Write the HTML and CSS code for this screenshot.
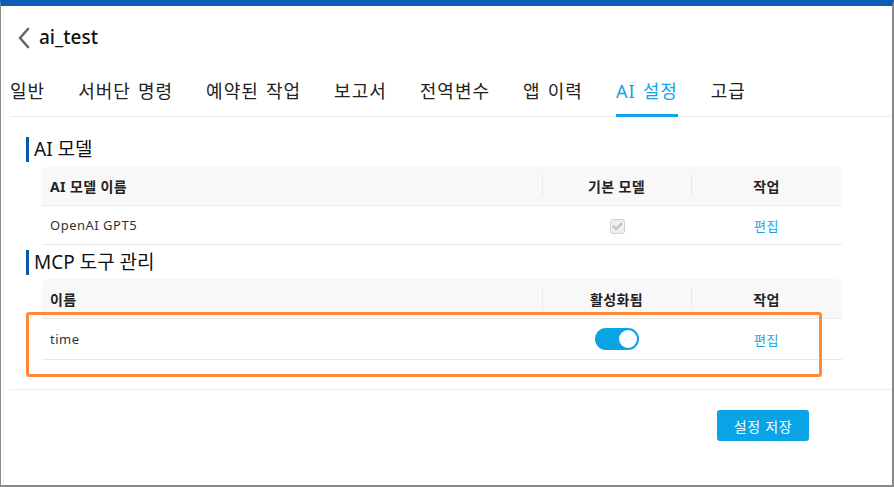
FILE: index.html
```html
<!DOCTYPE html>
<html lang="ko">
<head>
    <meta charset="UTF-8">
    <meta name="viewport" content="width=device-width, initial-scale=1.0">
    <title>ai_test - AI 설정</title>
    <link rel="stylesheet" href="styles.css">
</head>
<body>
    <div class="window">
        <div class="inner">
            <header class="app-header">
                <svg class="back" width="14" height="22" viewBox="0 0 14 22">
                    <path d="M11 2 L3 11 L11 20" fill="none" stroke="#666" stroke-width="2.6" stroke-linecap="round" stroke-linejoin="round"/>
                </svg>
                <h1>ai_test</h1>
            </header>

            <nav class="tabs">
                <a class="tab">일반</a>
                <a class="tab">서버단 명령</a>
                <a class="tab">예약된 작업</a>
                <a class="tab">보고서</a>
                <a class="tab">전역변수</a>
                <a class="tab">앱 이력</a>
                <a class="tab active">AI 설정</a>
                <a class="tab">고급</a>
            </nav>

            <div class="panel">
                <h2 class="section-title">AI 모델</h2>
                <table class="grid">
                    <colgroup>
                        <col class="col-name">
                        <col class="col-mid">
                        <col class="col-act">
                    </colgroup>
                    <thead>
                        <tr>
                            <th class="left">AI 모델 이름</th>
                            <th>기본 모델</th>
                            <th>작업</th>
                        </tr>
                    </thead>
                    <tbody>
                        <tr>
                            <td class="left">OpenAI GPT5</td>
                            <td>
                                <span class="check">
                                    <svg width="11" height="9" viewBox="0 0 11 9">
                                        <path d="M1.5 4.5 L4.2 7 L9.5 1.8" fill="none" stroke="#bdbdbd" stroke-width="2" stroke-linecap="round" stroke-linejoin="round"/>
                                    </svg>
                                </span>
                            </td>
                            <td><a class="link">편집</a></td>
                        </tr>
                    </tbody>
                </table>

                <h2 class="section-title">MCP 도구 관리</h2>
                <table class="grid">
                    <colgroup>
                        <col class="col-name">
                        <col class="col-mid">
                        <col class="col-act">
                    </colgroup>
                    <thead>
                        <tr>
                            <th class="left">이름</th>
                            <th>활성화됨</th>
                            <th>작업</th>
                        </tr>
                    </thead>
                    <tbody>
                        <tr class="tall">
                            <td class="left">time</td>
                            <td><span class="toggle on"><span class="knob"></span></span></td>
                            <td><a class="link">편집</a></td>
                        </tr>
                    </tbody>
                </table>

                <div class="highlight"></div>
            </div>

            <div class="actions">
                <button class="save">설정 저장</button>
            </div>
        </div>
    </div>
</body>
</html>
```

FILE: styles.css
```css
html, body {
    margin: 0;
    background-color: #fff;
}

body {
    font-family: "Noto Sans", "Noto Sans CJK KR", sans-serif;
    color: #222;
}

.window {
    box-sizing: border-box;
    height: 487px;
    border-top: 6px solid #0b5db3;
    border-left: 1px solid #8a8a8a;
    border-right: 2px solid #8a8a8a;
    border-bottom: 2px solid #8a8a8a;
    overflow: hidden;
}

.inner {
    margin-left: 2px;
    border-left: 1px solid #eeeeee;
    height: 100%;
}

.app-header {
    display: flex;
    align-items: center;
    height: 62px;
    padding-left: 13px;
}

.back {
    margin-right: 8px;
    margin-top: 1px;
}

.app-header h1 {
    margin: 0;
    font-size: 19px;
    font-weight: 500;
    color: #111;
}

.tabs {
    display: flex;
    margin-left: 6px;
    border-bottom: 1px solid #ececec;
    height: 48px;
}

.tab {
    display: flex;
    align-items: center;
    margin-right: 33px;
    font-size: 18px;
    letter-spacing: 1px;
    word-spacing: 1.5px;
    color: #222;
    border-bottom: 3px solid transparent;
    margin-bottom: -1px;
    padding-bottom: 3px;
    box-sizing: border-box;
}

.tab.active {
    color: #14a3e6;
    border-bottom-color: #14a3e6;
}

.panel {
    position: relative;
    margin-left: 6px;
    padding: 20px 0 29px 16px;
    border-bottom: 1px solid #ececec;
}

.section-title {
    margin: 0 0 4px;
    height: 25px;
    line-height: 24px;
    border-left: 3px solid #0b57a8;
    padding-left: 5px;
    font-size: 19px;
    font-weight: 400;
    color: #111;
}

.grid {
    margin-left: 16px;
    width: 800px;
    border-collapse: collapse;
    font-size: 13px;
    letter-spacing: 0.5px;
    margin-bottom: 5px;
}

.grid:last-of-type {
    margin-bottom: 0;
}

.col-name { width: 500px; }
.col-mid { width: 149px; }
.col-act { width: 151px; }

.grid th {
    position: relative;
    background-color: #f8f8f8;
    height: 39px;
    padding: 0;
    font-weight: 700;
    font-size: 14px;
    letter-spacing: 0.4px;
    color: #222;
    text-align: center;
    border-bottom: 1px solid #eaeaea;
}

.grid th:first-child {
    border-top-left-radius: 6px;
}

.grid th:last-child {
    border-top-right-radius: 6px;
}

.grid th + th::before {
    content: "";
    position: absolute;
    left: 0;
    top: 8px;
    bottom: 8px;
    border-left: 1px solid #e8e8e8;
}

.grid td {
    height: 38px;
    padding: 0;
    text-align: center;
    color: #333;
    border-bottom: 1px solid #eaeaea;
}

.grid tr.tall td {
    height: 40px;
}

.grid .left {
    text-align: left;
    padding-left: 8px;
}

.link {
    color: #14a3e6;
    cursor: pointer;
}

.check {
    display: inline-flex;
    align-items: center;
    justify-content: center;
    box-sizing: border-box;
    width: 15px;
    height: 15px;
    border: 1px solid #d2d2d2;
    border-radius: 3px;
    background-color: #eeeeee;
    vertical-align: middle;
    margin-left: 2px;
}

.toggle {
    display: inline-block;
    position: relative;
    width: 44px;
    height: 22px;
    border-radius: 11px;
    background-color: #c8c8c8;
    vertical-align: middle;
    margin-left: 1px;
}

.toggle.on {
    background-color: #0aa4e6;
}

.knob {
    position: absolute;
    top: 2px;
    right: 2px;
    width: 18px;
    height: 18px;
    border-radius: 50%;
    background-color: #fff;
}

.highlight {
    position: absolute;
    left: 16px;
    top: 195px;
    width: 790px;
    height: 59px;
    border: 3px solid #ff8a35;
    border-radius: 3px;
    pointer-events: none;
}

.actions {
    display: flex;
    justify-content: flex-end;
    padding: 20px 83px 0 0;
}

.save {
    width: 92px;
    height: 31px;
    border: none;
    border-radius: 3px;
    background-color: #0aa4e6;
    color: #fff;
    font-family: "Noto Sans CJK KR", sans-serif;
    font-size: 14px;
    letter-spacing: 0.6px;
    cursor: pointer;
}
```
